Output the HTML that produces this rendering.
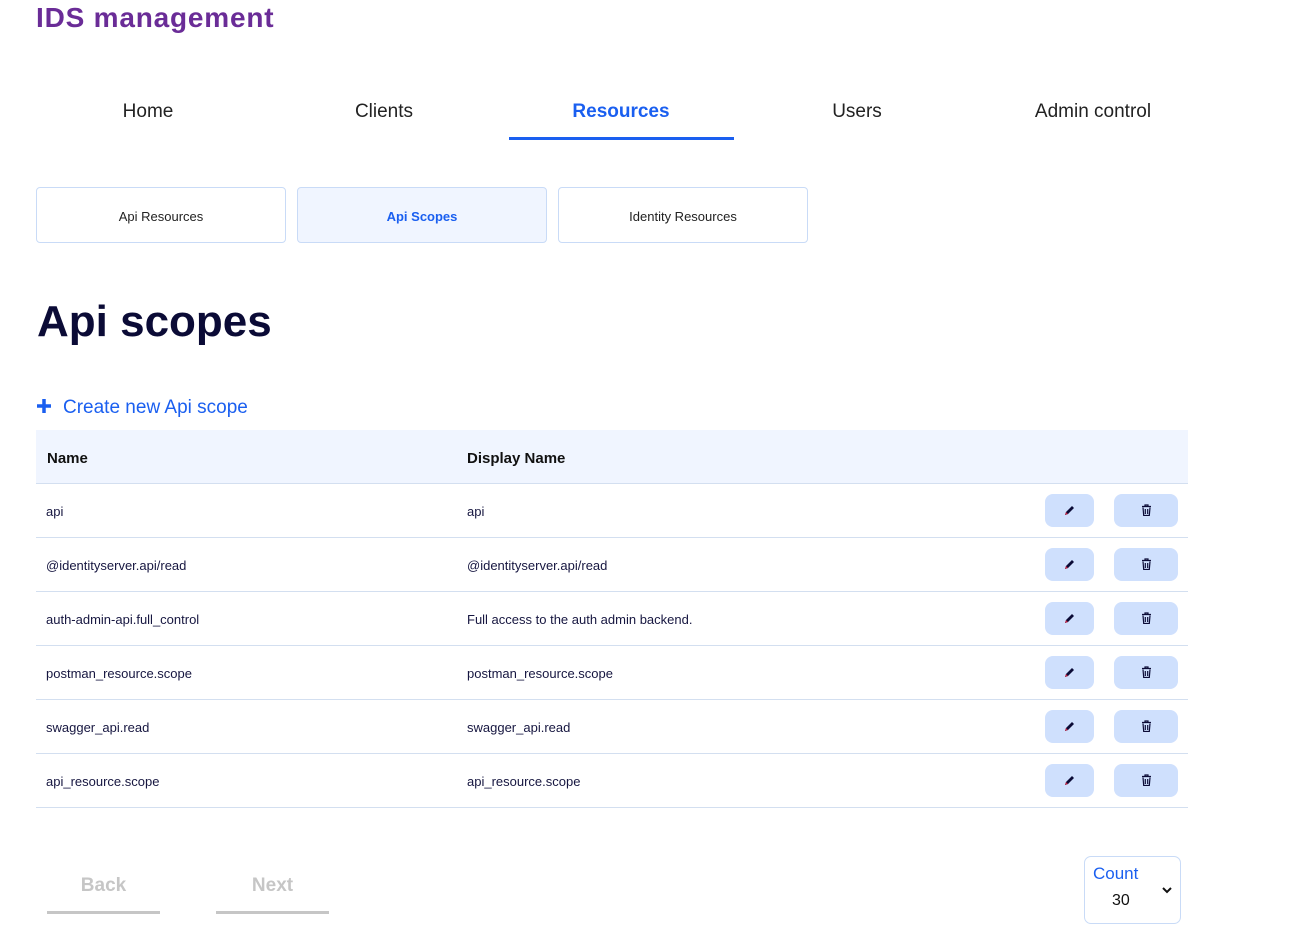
<!DOCTYPE html>
<html><head><meta charset="utf-8"><style>
*{margin:0;padding:0;box-sizing:border-box}
body{width:1309px;height:933px;background:#fff;font-family:"Liberation Sans",sans-serif;position:relative;overflow:hidden;color:#161640}
.abs{position:absolute}
h1.t{position:absolute;left:36px;top:2px;font-size:28px;font-weight:bold;color:#6a2c97;letter-spacing:0.8px}
.nav{position:absolute;top:101px;font-size:19px;color:#222;width:236px;text-align:center}
.sub{position:absolute;top:187px;width:250px;height:56px;border:1px solid #c9dbf7;border-radius:4px;font-size:13px;text-align:center;line-height:58px;color:#222}
.row{position:absolute;left:36px;width:1152px;height:54px;border-bottom:1px solid #d3dff0;font-size:13px;color:#161640}
.row span{position:absolute;top:20px}
.b{position:absolute;top:10px;height:33px;background:#cfe0fd;border-radius:8px}
</style></head><body>
<h1 class="t">IDS management</h1>
<div class="nav" style="left:30px">Home</div>
<div class="nav" style="left:266px">Clients</div>
<div class="nav" style="left:503px;color:#1a5ff0;font-weight:bold">Resources</div>
<div class="abs" style="left:509px;top:137px;width:225px;height:3px;background:#1a5ff0"></div>
<div class="nav" style="left:739px">Users</div>
<div class="nav" style="left:975px">Admin control</div>

<div class="sub" style="left:36px">Api Resources</div>
<div class="sub" style="left:297px;background:#f0f5ff;color:#1a5ff0;font-weight:bold">Api Scopes</div>
<div class="sub" style="left:558px">Identity Resources</div>

<div class="abs" style="left:37px;top:297px;font-size:44px;font-weight:bold;color:#0b0b36">Api scopes</div>

<svg class="abs" style="left:36px;top:398px" width="16" height="16"><path d="M8 1v14M1 8h14" stroke="#1a5ff0" stroke-width="3.5"/></svg>
<div class="abs" style="left:63px;top:397px;font-size:19px;color:#1a5ff0">Create new Api scope</div>

<div class="abs" style="left:36px;top:430px;width:1152px;height:54px;background:#f0f5ff;border-bottom:1px solid #d3dff0;font-size:15px;font-weight:bold;color:#111">
<span class="abs" style="left:11px;top:20px">Name</span><span class="abs" style="left:431px;top:20px">Display Name</span></div>

<div id="rows"></div>
<script>
var d=[["api","api"],["@identityserver.api/read","@identityserver.api/read"],["auth-admin-api.full_control","Full access to the auth admin backend."],["postman_resource.scope","postman_resource.scope"],["swagger_api.read","swagger_api.read"],["api_resource.scope","api_resource.scope"]];
var h="";
d.forEach(function(r,i){h+='<div class="row" style="top:'+(484+i*54)+'px"><span style="left:10px">'+r[0]+'</span><span style="left:431px">'+r[1]+'</span>'+
'<div class="b" style="left:1009px;width:49px"><svg class="abs" style="left:18px;top:10px" width="13" height="13"><path d="M2 11l1-3 6-6 2 2-6 6z" fill="#0b0b36"/><path d="M2 11l1-3 2 2z" fill="#c02040"/></svg></div>'+
'<div class="b" style="left:1078px;width:64px"><svg class="abs" style="left:27px;top:10px" width="11" height="12"><path d="M1 2.5h9M4 2.5V1h3v1.5M2 3.5l.7 8h5.6l.7-8M4.3 5v5M6.7 5v5" stroke="#0b0b36" stroke-width="1.2" fill="none"/></svg></div></div>'});
document.getElementById("rows").innerHTML=h;
</script>

<div class="abs" style="left:47px;top:875px;width:113px;text-align:center;font-size:19px;font-weight:bold;color:#c6c6c6">Back</div>
<div class="abs" style="left:47px;top:911px;width:113px;height:3px;background:#c6c6c6"></div>
<div class="abs" style="left:216px;top:875px;width:113px;text-align:center;font-size:19px;font-weight:bold;color:#c6c6c6">Next</div>
<div class="abs" style="left:216px;top:911px;width:113px;height:3px;background:#c6c6c6"></div>

<div class="abs" style="left:1084px;top:856px;width:97px;height:68px;border:1px solid #c9dbf7;border-radius:7px">
<div class="abs" style="left:8px;top:7px;font-size:17px;color:#1a5ff0">Count</div>
<div class="abs" style="left:27px;top:35px;font-size:16px;color:#111">30</div>
<svg class="abs" style="left:77px;top:30px" width="10" height="7"><path d="M1 1l4 4 4-4" stroke="#111" stroke-width="2" fill="none"/></svg>
</div>
</body></html>
